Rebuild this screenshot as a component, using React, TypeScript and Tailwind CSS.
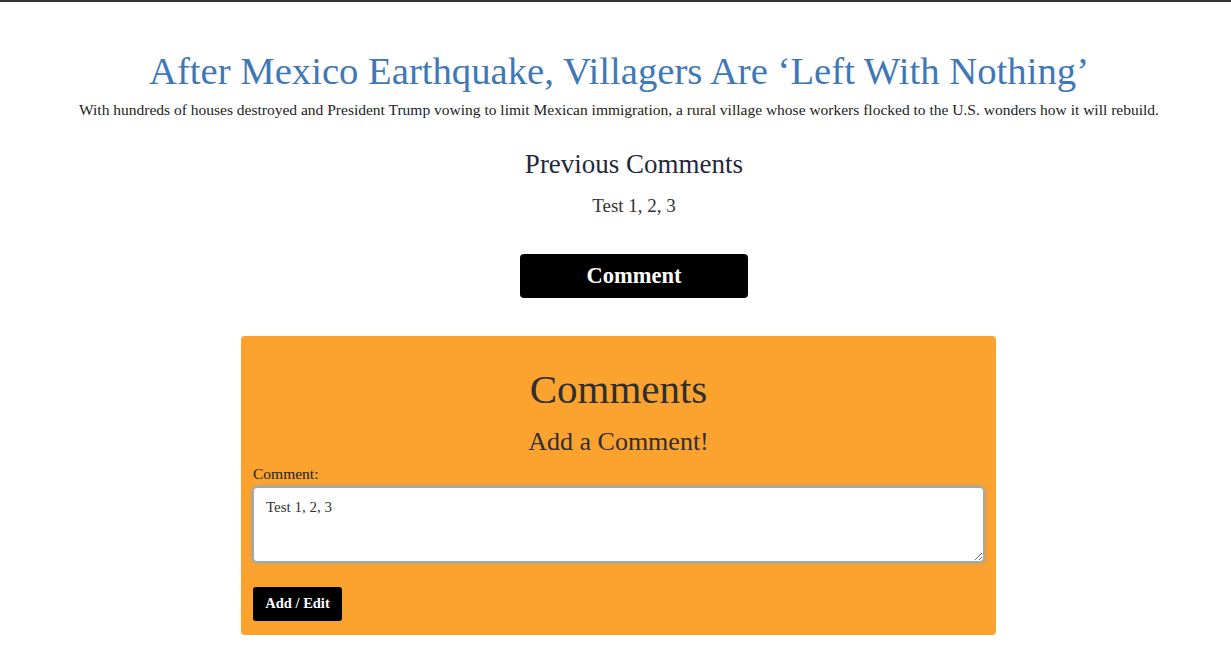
import { useState } from "react";

const serif = { fontFamily: '"Liberation Serif", "DejaVu Serif", serif' };

function CommentForm() {
  const [text, setText] = useState("Test 1, 2, 3");

  return (
    <div className="mt-[38px] ml-[241px] w-[755px] rounded-[4px] bg-[#fba22f] px-3 pb-[14px] pt-[28px]">
      <h2 className="text-center text-[41px] leading-[50px] text-[#2f2f2f]">Comments</h2>
      <h3 className="mt-[12px] text-center text-[26px] leading-[32px] text-[#2f2f2f]">
        Add a Comment!
      </h3>
      <label className="mt-[6px] block text-[15.5px] leading-[20px] text-[#222]">Comment:</label>
      <textarea
        value={text}
        onChange={(e) => setText(e.target.value)}
        className="mt-[3px] block h-[75px] w-full rounded-[4px] border border-[#7fb0e0] bg-white px-3 py-2 text-[15px] text-[#333] shadow-[0_0_4px_#6aa6e0]"
        style={serif}
      />
      <button className="mt-[25px] block h-[34px] w-[89px] rounded-[3px] bg-black text-[14.5px] font-bold text-white">
        Add / Edit
      </button>
    </div>
  );
}

export default function App() {
  return (
    <div className="min-h-[646px] border-t-2 border-[#333] bg-white" style={serif}>
      <div className="pl-[7px] pt-[45px] text-center">
        <h1 className="text-[38.7px] leading-[48px] text-[#3f78b6]">
          After Mexico Earthquake, Villagers Are ‘Left With Nothing’
        </h1>
        <p className="mt-[5px] text-[15.5px] leading-[20px] text-[#222]">
          With hundreds of houses destroyed and President Trump vowing to limit Mexican immigration, a
          rural village whose workers flocked to the U.S. wonders how it will rebuild.
        </p>
        <div className="pl-[30px]">
          <h2 className="mt-[28px] text-[27px] leading-[32px] text-[#1f2a3a]">Previous Comments</h2>
          <p className="mt-[14px] text-[19px] leading-[24px] text-[#333]">Test 1, 2, 3</p>
          <button className="mt-[36px] h-[44px] w-[228px] rounded-[4px] bg-black text-[22.5px] font-bold text-white">
            Comment
          </button>
        </div>
      </div>
      <CommentForm />
    </div>
  );
}
